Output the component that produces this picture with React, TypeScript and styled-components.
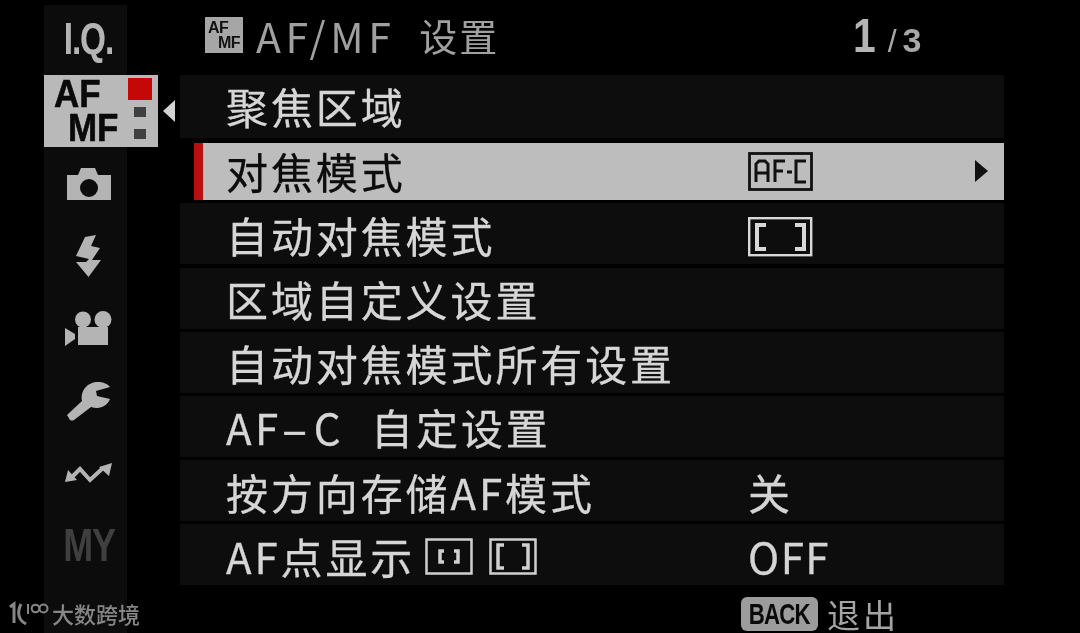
import React from "react";
import styled, { createGlobalStyle } from "styled-components";

const Global = createGlobalStyle`
  html, body { margin: 0; padding: 0; background: #000; }
  body { font-family: "Noto Sans CJK SC", "Noto Sans", sans-serif; }
`;
const Screen = styled.div`
  width: 1080px; height: 633px; background: #000; overflow: hidden;
  display: grid; grid-template-columns: 180px 824px; grid-template-rows: 75px 511px 47px;
  box-sizing: border-box; position: relative; filter: blur(0.45px);
`;
const Rail = styled.nav`
  grid-column: 1; grid-row: 1 / 4; margin-left: 44px; width: 83px; margin-top: 5px;
  background: #0c0c0c; display: flex; flex-direction: column; align-items: center;
  padding-top: 3px; box-sizing: border-box;
`;
const RailSlot = styled.div<{ $h: number }>`
  height: ${p => p.$h}px; width: 100%; display: flex; align-items: center; justify-content: center; flex: none;
  padding-left: 6px; box-sizing: border-box;
`;
const IQ = styled.span`
  font: 700 44px/1 "Liberation Sans", sans-serif; color: #b4b4b4;
  letter-spacing: -1.5px; transform: scaleX(.76); flex: none;
`;
const My = styled(IQ)`color: #3f3f3f; font-size: 46px; transform: scaleX(.78);`;
const ActiveTab = styled.div`
  width: 114px; height: 72px; background: #b9b9b9; flex: none; align-self: flex-start;
  margin: 5px 0 0; position: relative; color: #0a0a0a;
`;
const TabText = styled.span<{ $x: number; $y: number }>`
  position: absolute; left: ${p => p.$x}px; top: ${p => p.$y}px;
  font: 700 38px/28px "Liberation Sans", sans-serif; -webkit-text-stroke: .6px #0a0a0a;
  transform: scaleX(.92); transform-origin: left;
`;
const Dot = styled.i<{ $y: number; $big?: boolean }>`
  position: absolute; left: ${p => p.$big ? 84 : 90}px; top: ${p => p.$y}px;
  width: ${p => p.$big ? 24 : 12}px; height: ${p => p.$big ? 22 : 10}px; background: ${p => p.$big ? "#c40808" : "#404040"};
`;
const Pointer = styled.i`
  position: absolute; left: 119px; top: 25px; width: 0; height: 0;
  border-top: 11.5px solid transparent; border-bottom: 11.5px solid transparent; border-right: 12px solid #d2d2d2;
`;
const Header = styled.header`
  grid-column: 2; grid-row: 1; display: flex; align-items: center; padding: 0 0 5px 25px; color: #a0a0a0;
  font-size: 41px; line-height: 1; letter-spacing: 4.6px; position: relative;
`;
const HeaderIcon = styled.span`
  width: 38px; height: 36px; background: #a6a6a6; color: #111; margin-right: 13px; flex: none;
  display: flex; flex-direction: column; justify-content: center; font: 700 16px/15px "Liberation Sans", sans-serif;
  padding: 0 3px; box-sizing: border-box;
`;
const HeaderIconLine = styled.span<{ $right?: boolean }>`text-align: ${p => p.$right ? "right" : "left"}; letter-spacing: -.5px;`;
const HeaderCjk = styled.span`margin-left: 24px; letter-spacing: 2px; font-size: 38px;`;
const Page = styled.span`
  position: absolute; left: 671px; top: 12px; display: flex; align-items: baseline; color: #b4b4b4;
  font-family: "Liberation Sans", sans-serif; font-weight: 700; letter-spacing: 0;
`;
const PageBig = styled.b`font-size: 48px; line-height: 48px; display: inline-block; transform: scaleX(.85);`;
const PageSlash = styled.span`font-size: 32px; margin-left: 10px; margin-right: 6px; color: #a8a8a8; line-height: 34px; font-weight: 400;`;
const PageSmall = styled.span`font-size: 34px; color: #a8a8a8; line-height: 34px;`;
const Menu = styled.div`grid-column: 2; grid-row: 2; display: flex; flex-direction: column; gap: 3.2px;`;
const Row = styled.div<{ $active?: boolean }>`
  height: ${p => p.$active ? 57 : 61}px; flex: none; display: flex; align-items: center; position: relative; box-sizing: border-box;
  background: ${p => p.$active ? "#bdbdbd" : "#0d0d0d"}; color: ${p => p.$active ? "#0c0c0c" : "#d6d6d6"};
  -webkit-text-stroke: .3px ${p => p.$active ? "#0c0c0c" : "#d6d6d6"};
  border-left: ${p => p.$active ? "9px solid #b80f0f" : "0"};
  margin-left: ${p => p.$active ? "14px" : "0"};
  margin-top: ${p => p.$active ? "2.5px" : "0"};
  padding-left: ${p => p.$active ? "23px" : "46px"};
  &:first-child { height: 62.5px; }
`;
const Label = styled.span<{ $shift: number }>`
  font-size: 42px; letter-spacing: 2.9px; line-height: 1; white-space: nowrap; display: flex; align-items: center;
  margin-top: ${p => p.$shift}px;
`;
const Wide = styled.span`letter-spacing: 3.5px; margin-right: 27px;`;
const Hyphen = styled.span`display: inline-block; transform: scaleX(1.9); margin: 0 7px;`;
const Value = styled.span<{ $shift: number; $active?: boolean }>`
  position: absolute; left: ${p => p.$active ? 545 : 568}px; top: 50%; transform: translateY(-50%); font-size: 42px; line-height: 1; letter-spacing: 1.5px; color: #d4d4d4;
  margin-top: ${p => p.$shift}px; display: flex;
`;
const Glyph = styled.svg`display: block; flex: none;`;
const AfPointGlyphs = styled.span`display: flex; align-items: center; gap: 16px; margin-left: 10px; margin-top: 1px;`;
const Arrow = styled.i`
  position: absolute; right: 16px; top: 50%; margin-top: -11.5px; width: 0; height: 0;
  border-top: 11.5px solid transparent; border-bottom: 11.5px solid transparent; border-left: 13px solid #111;
`;
const Footer = styled.footer`
  grid-column: 2; grid-row: 3; display: flex; align-items: center; padding: 9px 0 0 561px; gap: 9px; color: #a4a4a4;
  font-size: 33px; letter-spacing: 3px; line-height: 1;
`;
const Back = styled.span`
  background: #9c9c9c; color: #0a0a0a; border-radius: 6px; width: 77px; height: 34px; display: flex; align-items: center; justify-content: center; flex: none;
  font: 700 30px/1 "Liberation Sans", sans-serif; letter-spacing: -1px; overflow: hidden; white-space: nowrap;
`;
const BackText = styled.span`display: inline-block; transform: scaleX(.74);`;
const Watermark = styled.div`
  position: absolute; left: 8px; top: 598px; display: flex; align-items: center; gap: 2px; color: #868686; font-size: 22px; line-height: 30px; font-weight: 500;
`;

const Bracket = () => (
  <Glyph width="66" height="40" viewBox="0 0 66 40" fill="none" stroke="#d8d8d8">
    <rect x="1.2" y="1.2" width="62" height="37" strokeWidth="2.4" />
    <path d="M18 8H9V32H18M47 8H56V32H47" strokeWidth="4" />
  </Glyph>
);
const AfC = () => (
  <Glyph width="66" height="40" viewBox="0 0 66 40" fill="none" stroke="#111" strokeWidth="3">
    <rect x="1.5" y="1.5" width="62" height="36" strokeWidth="2.8" />
    <path d="M8 30V12L11 9H17L20 12V30M8 21H20M27 30V9H37M27 19H35M39 20H44M58 9H48V30H58" />
  </Glyph>
);
const SmallIcons = () => (
  <AfPointGlyphs>
    <Glyph width="48" height="37" viewBox="0 0 48 37" fill="none" stroke="#d0d0d0">
      <rect x="1.5" y="1.5" width="45" height="34" strokeWidth="2.5" />
      <path d="M19 13H15V24H19M29 13H33V24H29" strokeWidth="3.5" />
    </Glyph>
    <Glyph width="48" height="37" viewBox="0 0 48 37" fill="none" stroke="#d0d0d0">
      <rect x="1.5" y="1.5" width="45" height="34" strokeWidth="2.5" />
      <path d="M15 7H9V30H15M33 7H39V30H33" strokeWidth="3.5" />
    </Glyph>
  </AfPointGlyphs>
);
const Camera = () => (
  <Glyph width="44" height="32" viewBox="0 0 44 32">
    <path fillRule="evenodd" fill="#b4b4b4" d="M0 7H11L14 0H28L31 7H44V32H0ZM22 11A9 9 0 1 0 22 29A9 9 0 1 0 22 11Z" />
  </Glyph>
);
const Flash = () => (
  <Glyph width="25" height="42" viewBox="0 0 25 42">
    <path fill="#b4b4b4" d="M9 2L20 0L15 11L24 13L16 25H25L12.5 42L0 27H10L13 24L0 21Z" />
  </Glyph>
);
const Movie = () => (
  <Glyph width="47" height="35" viewBox="0 0 47 35">
    <g fill="#b4b4b4">
      <circle cx="18" cy="8.5" r="8" /><circle cx="38" cy="8.5" r="8.5" />
      <path d="M13 16H43V34H13ZM0 17L10 23V28L0 35Z" />
    </g>
  </Glyph>
);
const Wrench = () => (
  <Glyph width="44" height="39" viewBox="0 0 44 39">
    <path fill="#b4b4b4" d="M0 33L15 19C13 8 21 0 31 0C36 0 41 2 43 5L29 9L30 14L43 17C40 24 33 28 24 25L7 38Q5 39 3 38Z" />
  </Glyph>
);
const Wave = () => (
  <Glyph width="48" height="20" viewBox="0 0 48 20" fill="none">
    <path stroke="#b4b4b4" strokeWidth="4" d="M5 16L15 6L25 17L38 5" />
    <path fill="#b4b4b4" d="M0 19L3 7L12 17ZM47 0L44 13L34 4Z" />
  </Glyph>
);
const Logo = () => (
  <Glyph width="42" height="28" viewBox="0 0 42 28" fill="none" stroke="#868686">
    <path d="M2 8L6 5V24" strokeWidth="3" />
    <path d="M13 5C9 13 10 21 18 25" strokeWidth="3" />
    <path d="M20 5V15" strokeWidth="2" />
    <circle cx="27.5" cy="9.5" r="3.8" strokeWidth="2" />
    <circle cx="35.5" cy="9.5" r="4" strokeWidth="2" />
  </Glyph>
);

const rows: { label: React.ReactNode; value?: React.ReactNode; valueShift?: number; active?: boolean; shift: number }[] = [
  { label: "聚焦区域", shift: 0 },
  { label: "对焦模式", value: <AfC />, valueShift: 0, active: true, shift: -2 },
  { label: "自动对焦模式", value: <Bracket />, valueShift: 3, shift: 2 },
  { label: "区域自定义设置", shift: 2 },
  { label: "自动对焦模式所有设置", shift: 2 },
  { label: <><Wide>AF<Hyphen>-</Hyphen>C</Wide><span>自定设置</span></>, shift: 2 },
  { label: "按方向存储AF模式", value: "关", valueShift: 1, shift: 2 },
  { label: <>AF点显示<SmallIcons /></>, value: "OFF", valueShift: 1, shift: 2 },
];

export default function App() {
  return (
    <Screen>
      <Global />
      <Rail>
        <RailSlot $h={62}><IQ>I.Q.</IQ></RailSlot>
        <ActiveTab>
          <TabText $x={10} $y={5}>AF</TabText>
          <TabText $x={24} $y={39}>MF</TabText>
          <Dot $y={3} $big />
          <Dot $y={32} />
          <Dot $y={54} />
          <Pointer />
        </ActiveTab>
        <RailSlot $h={74}><Camera /></RailSlot>
        <RailSlot $h={70}><Flash /></RailSlot>
        <RailSlot $h={74}><Movie /></RailSlot>
        <RailSlot $h={72}><Wrench /></RailSlot>
        <RailSlot $h={72}><Wave /></RailSlot>
        <RailSlot $h={72}><My>MY</My></RailSlot>
      </Rail>
      <Header>
        <HeaderIcon><HeaderIconLine>AF</HeaderIconLine><HeaderIconLine $right>MF</HeaderIconLine></HeaderIcon>
        AF/MF<HeaderCjk>设置</HeaderCjk>
        <Page><PageBig>1</PageBig><PageSlash>/</PageSlash><PageSmall>3</PageSmall></Page>
      </Header>
      <Menu>
        {rows.map((r, i) => (
          <Row key={i} $active={r.active}>
            <Label $shift={r.shift}>{r.label}</Label>
            {r.value && <Value $active={r.active} $shift={r.valueShift ?? 0}>{r.value}</Value>}
            {r.active && <Arrow />}
          </Row>
        ))}
      </Menu>
      <Footer><Back><BackText>BACK</BackText></Back>退出</Footer>
      <Watermark><Logo />大数跨境</Watermark>
    </Screen>
  );
}
